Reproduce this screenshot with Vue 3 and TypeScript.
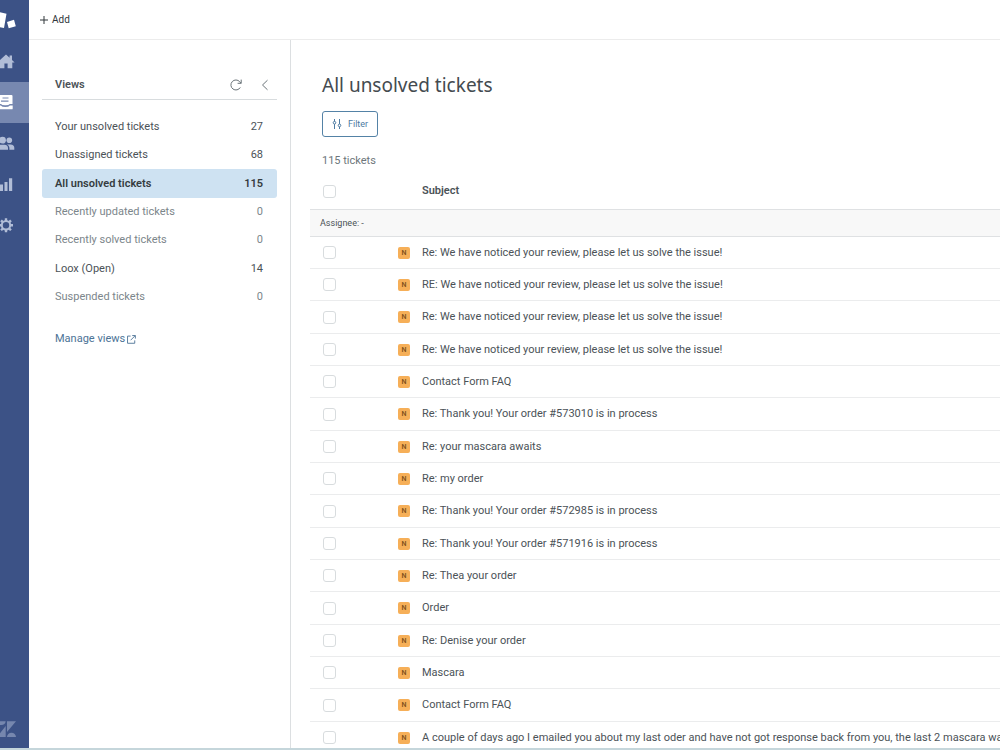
<script setup lang="ts">
import { ref } from 'vue'

interface View { name: string; count: number }

const views: View[] = [
  { name: 'Your unsolved tickets', count: 27 },
  { name: 'Unassigned tickets', count: 68 },
  { name: 'All unsolved tickets', count: 115 },
  { name: 'Recently updated tickets', count: 0 },
  { name: 'Recently solved tickets', count: 0 },
  { name: 'Loox (Open)', count: 14 },
  { name: 'Suspended tickets', count: 0 },
]
const current = ref('All unsolved tickets')

const subjects: string[] = [
  'Re: We have noticed your review, please let us solve the issue!',
  'RE: We have noticed your review, please let us solve the issue!',
  'Re: We have noticed your review, please let us solve the issue!',
  'Re: We have noticed your review, please let us solve the issue!',
  'Contact Form FAQ',
  'Re: Thank you! Your order #573010 is in process',
  'Re: your mascara awaits',
  'Re: my order',
  'Re: Thank you! Your order #572985 is in process',
  'Re: Thank you! Your order #571916 is in process',
  'Re: Thea your order',
  'Order',
  'Re: Denise your order',
  'Mascara',
  'Contact Form FAQ',
  'A couple of days ago I emailed you about my last oder and have not got response back from you, the last 2 mascara wa',
]
</script>

<template>
  <div class="app">
    <nav class="rail" aria-label="Main">
      <a href="#" class="rail-item logo" aria-label="Start">
        <svg viewBox="0 0 29 41"><path d="M0 12.3 6.5 13.8 4 28 0 27.2ZM7 22 14 19.8 15.8 26.2 8.7 28.2Z" /></svg>
      </a>
      <a href="#" class="rail-item" aria-label="Home">
        <svg viewBox="0 0 29 41"><path d="M6 13.5 9.6 16.8V14.5H12V19L14.6 21.4H12.3V27.3H7.6V22.4H4.4V27.3H-.3V21.4H-2.6Z" /></svg>
      </a>
      <a href="#" class="rail-item active" aria-label="Views">
        <svg viewBox="0 0 29 41">
          <path fill-rule="evenodd" d="M0 13H11.5Q12.5 13 12.5 14V22H9.8Q9 23.2 5.3 23.2T1 22H0ZM2.5 15.4V16.6H8.5V15.4ZM1 18.6V19.8H8.5V18.6Z" />
          <path d="M0 23.4H.8Q2 25 5.3 25T10 23.4H12.7V26.4Q12.7 27.3 11.8 27.3H0Z" />
        </svg>
      </a>
      <a href="#" class="rail-item" aria-label="Customers">
        <svg viewBox="0 0 29 41">
          <circle cx="2.5" cy="17.2" r="3.4" /><circle cx="9.3" cy="17.3" r="2.8" />
          <path d="M-4 26.8V24.8Q-4 21.8 0 21.8H4.5Q8 22 8 25V26.8ZM7 21.5H10.5Q14.3 21.7 14.3 24.8V26.8H9.4V24.7Q9.2 22.6 7 21.5Z" />
        </svg>
      </a>
      <a href="#" class="rail-item" aria-label="Reporting">
        <svg viewBox="0 0 29 41"><path d="M0 20.5H3V27H0ZM4.5 18H7.5V27H4.5ZM9 14.2H12.2V27H9Z" /></svg>
      </a>
      <a href="#" class="rail-item" aria-label="Admin">
        <svg viewBox="0 0 29 41">
          <circle cx="6" cy="20.3" r="4.2" class="ring" />
          <path class="teeth" d="M6 13.3V16M6 24.6V27.3M-1 20.3H1.7M10.3 20.3H13M1.05 15.35 3 17.3M9 23.3 10.95 25.25M10.95 15.35 9 17.3M3 23.3 1.05 25.25" />
        </svg>
      </a>
      <a href="#" class="rail-item brand" aria-label="Products">
        <svg viewBox="0 0 29 41"><path d="M-3 14.3H5.7A4.4 4.4 0 0 1-3 14.3ZM5.7 19V30H-3ZM7 14.3H16L7 25ZM7 30A4.5 4.3 0 0 1 16 30Z" /></svg>
      </a>
    </nav>

    <div class="workspace">
      <header class="topbar">
        <button type="button" class="add">
          <svg viewBox="0 0 8 8"><path d="M4 0V8M0 4H8" /></svg>Add
        </button>
      </header>

      <div class="body">
        <aside class="views">
          <div class="views-head">
            <h2>Views</h2>
            <button type="button" class="icon" aria-label="Refresh">
              <svg viewBox="0 0 12 12"><path d="M10.3 8.4A5 5 0 1 1 9.7 2.7L11 4.2M11.2.6V4.3H7.6" /></svg>
            </button>
            <button type="button" class="icon" aria-label="Collapse">
              <svg viewBox="0 0 12 12"><path d="M8.5 1.2 3.5 6 8.5 10.8" /></svg>
            </button>
          </div>
          <ul>
            <li v-for="v in views" :key="v.name">
              <a href="#" :class="{ selected: v.name === current, empty: v.count === 0 }" @click.prevent="current = v.name">
                <span>{{ v.name }}</span><span>{{ v.count }}</span>
              </a>
            </li>
          </ul>
          <a href="#" class="manage">Manage views
            <svg viewBox="0 0 10 10"><path d="M4 1.2H.6V9.2H8.6V6M4 5.8 9 .8M5.8.6H9.3V4" /></svg>
          </a>
        </aside>

        <main>
          <h1>{{ current }}</h1>
          <button type="button" class="filter">
            <svg viewBox="0 0 10 10"><path d="M2.5 0V2.5M2.5 5V10M7.5 0V5M7.5 7.8V10" /><circle cx="2.5" cy="3.7" r="1.3" /><circle cx="7.5" cy="6.4" r="1.3" /></svg>Filter
          </button>
          <p class="total">115 tickets</p>
          <table>
            <colgroup><col class="c-check" /><col class="c-badge" /><col /></colgroup>
            <thead>
              <tr>
                <th><input type="checkbox" aria-label="Select all tickets" /></th>
                <th></th>
                <th scope="col">Subject</th>
              </tr>
              <tr class="group"><th colspan="3" scope="colgroup">Assignee: -</th></tr>
            </thead>
            <tbody>
              <tr v-for="(s, i) in subjects" :key="i">
                <td><input :id="'ticket-' + i" type="checkbox" :aria-label="s" /></td>
                <td><span class="badge">N</span></td>
                <td><label :for="'ticket-' + i">{{ s }}</label></td>
              </tr>
            </tbody>
          </table>
        </main>
      </div>
    </div>
  </div>
</template>

<style>
body { margin: 0; background: #fff; }
</style>

<style scoped>
.app {
  display: flex;
  height: 100vh;
  box-sizing: border-box;
  overflow: hidden;
  border-bottom: 2px solid #c5d6db;
  font: 11px/16px Roboto, "Noto Sans", sans-serif;
  color: #4b5257;
}
a { text-decoration: none; color: inherit; }
button { font: inherit; color: inherit; background: none; border: 0; padding: 0; cursor: pointer; }
svg { fill: none; stroke: currentColor; display: block; }

.rail { width: 29px; flex: none; display: flex; flex-direction: column; background: #3c5286; }
.rail-item { height: 41px; color: #b1bdd7; }
.rail-item svg { width: 29px; height: 41px; fill: currentColor; stroke: none; }
.rail-item.logo { color: #fff; }
.rail-item.active { background: #7788b0; color: #fff; }
.rail-item.brand { margin-top: auto; color: #7687ae; }
.rail-item .ring { fill: none; stroke: currentColor; stroke-width: 2; }
.rail-item .teeth { stroke: currentColor; stroke-width: 2.4; }

.workspace { flex: 1; min-width: 0; display: flex; flex-direction: column; }
.topbar { flex: none; height: 39px; display: flex; align-items: center; padding: 0 11px; border-bottom: 1px solid #ececec; }
.add { display: flex; align-items: center; gap: 4px; font-size: 10px; color: #30363a; }
.add svg { width: 8px; height: 8px; }
.body { flex: 1; min-height: 0; display: flex; }

.views { width: 262px; flex: none; box-sizing: border-box; padding: 30px 13px 0; border-right: 1px solid #dcdfe1; }
.views-head { display: flex; align-items: center; gap: 17px; height: 29px; padding: 0 6px 0 13px; border-bottom: 1px solid #d8dcde; }
h2 { flex: 1; margin: 0; font-size: 11px; font-weight: 600; }
.icon { color: #6b7479; }
.icon svg { width: 12px; height: 12px; }
ul { list-style: none; margin: 13px 0 0; padding: 0; }
li a { display: flex; align-items: center; justify-content: space-between; height: 28px; padding: 0 14px 0 13px; border-radius: 3px; }
li:nth-child(3n) a { height: 29px; }
.empty { color: #7c868b; }
.selected { background: #cee2f2; color: #353c40; font-weight: 600; }
.manage { display: inline-flex; align-items: center; gap: 2px; margin: 20px 13px; color: #4c7396; }
.manage svg { width: 9px; height: 9px; }

main { flex: 1; min-width: 0; padding: 30px 0 0 19px; overflow: hidden; }
h1 { margin: 0 12px; font-family: "Noto Sans", "Open Sans", sans-serif; font-size: 19px; line-height: 30px; font-weight: 400; color: #444b50; }
.filter { display: flex; align-items: center; gap: 6px; height: 26px; margin: 11px 12px 0; padding: 0 9px; border: 1px solid #5482a6; border-radius: 3px; font-size: 9px; color: #4d7ba2; }
.filter svg { width: 10px; height: 10px; }
.total { margin: 16px 12px 0; color: #6d767b; }

table { width: 100%; table-layout: fixed; border-collapse: separate; border-spacing: 0; margin-top: 4px; }
.c-check { width: 88px; }
.c-badge { width: 24px; }
th, td { height: 31px; padding: 0; text-align: left; vertical-align: middle; border-bottom: 1px solid #ebeced; white-space: nowrap; overflow: hidden; }
th { height: 36px; font-weight: 600; border-color: #dfe1e3; }
.group th { height: 26px; padding: 0 10px; font-size: 9px; font-weight: 400; background: #f8f8f8; }
tbody tr:nth-child(3n) td { height: 32px; }
input { appearance: none; display: block; width: 13px; height: 13px; margin: 0 0 0 13px; border: 1px solid #d8dcde; border-radius: 3px; background: #fff; }
input:checked { background: #4d7ba2; }
.badge { display: block; width: 12px; height: 12px; border-radius: 2px; background: #f6af58; color: #80501c; font-size: 7px; line-height: 12px; font-weight: 600; text-align: center; }
</style>
